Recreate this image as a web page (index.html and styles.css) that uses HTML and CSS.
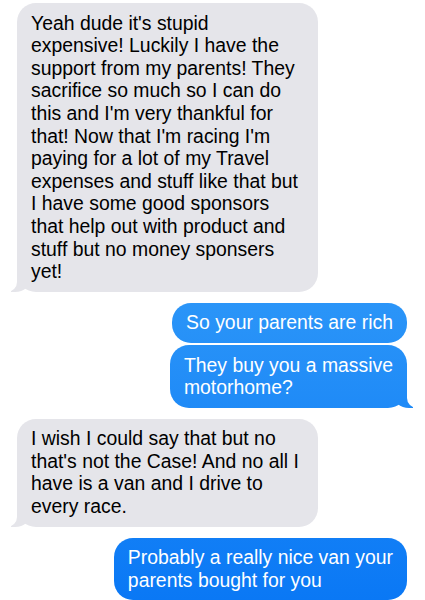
FILE: index.html
```html
<!DOCTYPE html>
<html lang="en">
<head>
	<meta charset="UTF-8">
	<title>Messages</title>
<link rel="stylesheet" href="styles.css">
</head>
<body>
<div class="chat">
	<p class="msg them">Yeah dude it's stupid<br>expensive! Luckily I have the<br>support from my parents! They<br>sacrifice so much so I can do<br>this and I'm very thankful for<br>that! Now that I'm racing I'm<br>paying for a lot of my Travel<br>expenses and stuff like that but<br>I have some good sponsors<br>that help out with product and<br>stuff but no money sponsers<br>yet!</p>
	<p class="msg me first">So your parents are rich</p>
	<p class="msg me tail">They buy you a massive<br>motorhome?</p>
	<p class="msg them">I wish I could say that but no<br>that's not the Case! And no all I<br>have is a van and I drive to<br>every race.</p>
	<p class="msg me">Probably a really nice van your<br>parents bought for you</p>
</div>
</body>
</html>
```

FILE: styles.css
```css
*{padding:0;margin:0;box-sizing:border-box;}
body{
	background:#fff;
	font-family:"Liberation Sans", Arial, sans-serif;
	font-size:19.4px;
	line-height:22.6px;
}
.chat{
	display:flex;
	flex-direction:column;
	gap:11px;
	padding:3px 18px 0 17px;
}
/*气泡*/
.msg{
	position:relative;
	border-radius:19px;
	padding:8.6px 14px 9px 14px;
	white-space:nowrap;
}
.them{
	align-self:flex-start;
	width:301px;
	background:#e5e5ea;
	color:#000;
}
.me{
	align-self:flex-end;
	color:#fff;
	background:linear-gradient(#3fa6fb 0%, #2b95f8 50%, #0a78f5 100%) fixed;
}
.me.first{
	margin-bottom:-9px;
}
/*尾巴*/
.them::before,
.tail::before{
	content:"";
	position:absolute;
	bottom:0;
	width:20px;
	height:22px;
	z-index:0;
}
.them::after,
.tail::after{
	content:"";
	position:absolute;
	bottom:0;
	width:10px;
	height:22px;
	background:#fff;
	z-index:1;
}
.them::before{
	left:-6px;
	background:#e5e5ea;
	border-bottom-right-radius:16px 14px;
}
.them::after{
	left:-10px;
	border-bottom-right-radius:10px;
}
.tail::before{
	right:-6px;
	background:linear-gradient(#3fa6fb 0%, #2b95f8 50%, #0a78f5 100%) fixed;
	border-bottom-left-radius:16px 14px;
}
.tail::after{
	right:-10px;
	border-bottom-left-radius:10px;
}
```
